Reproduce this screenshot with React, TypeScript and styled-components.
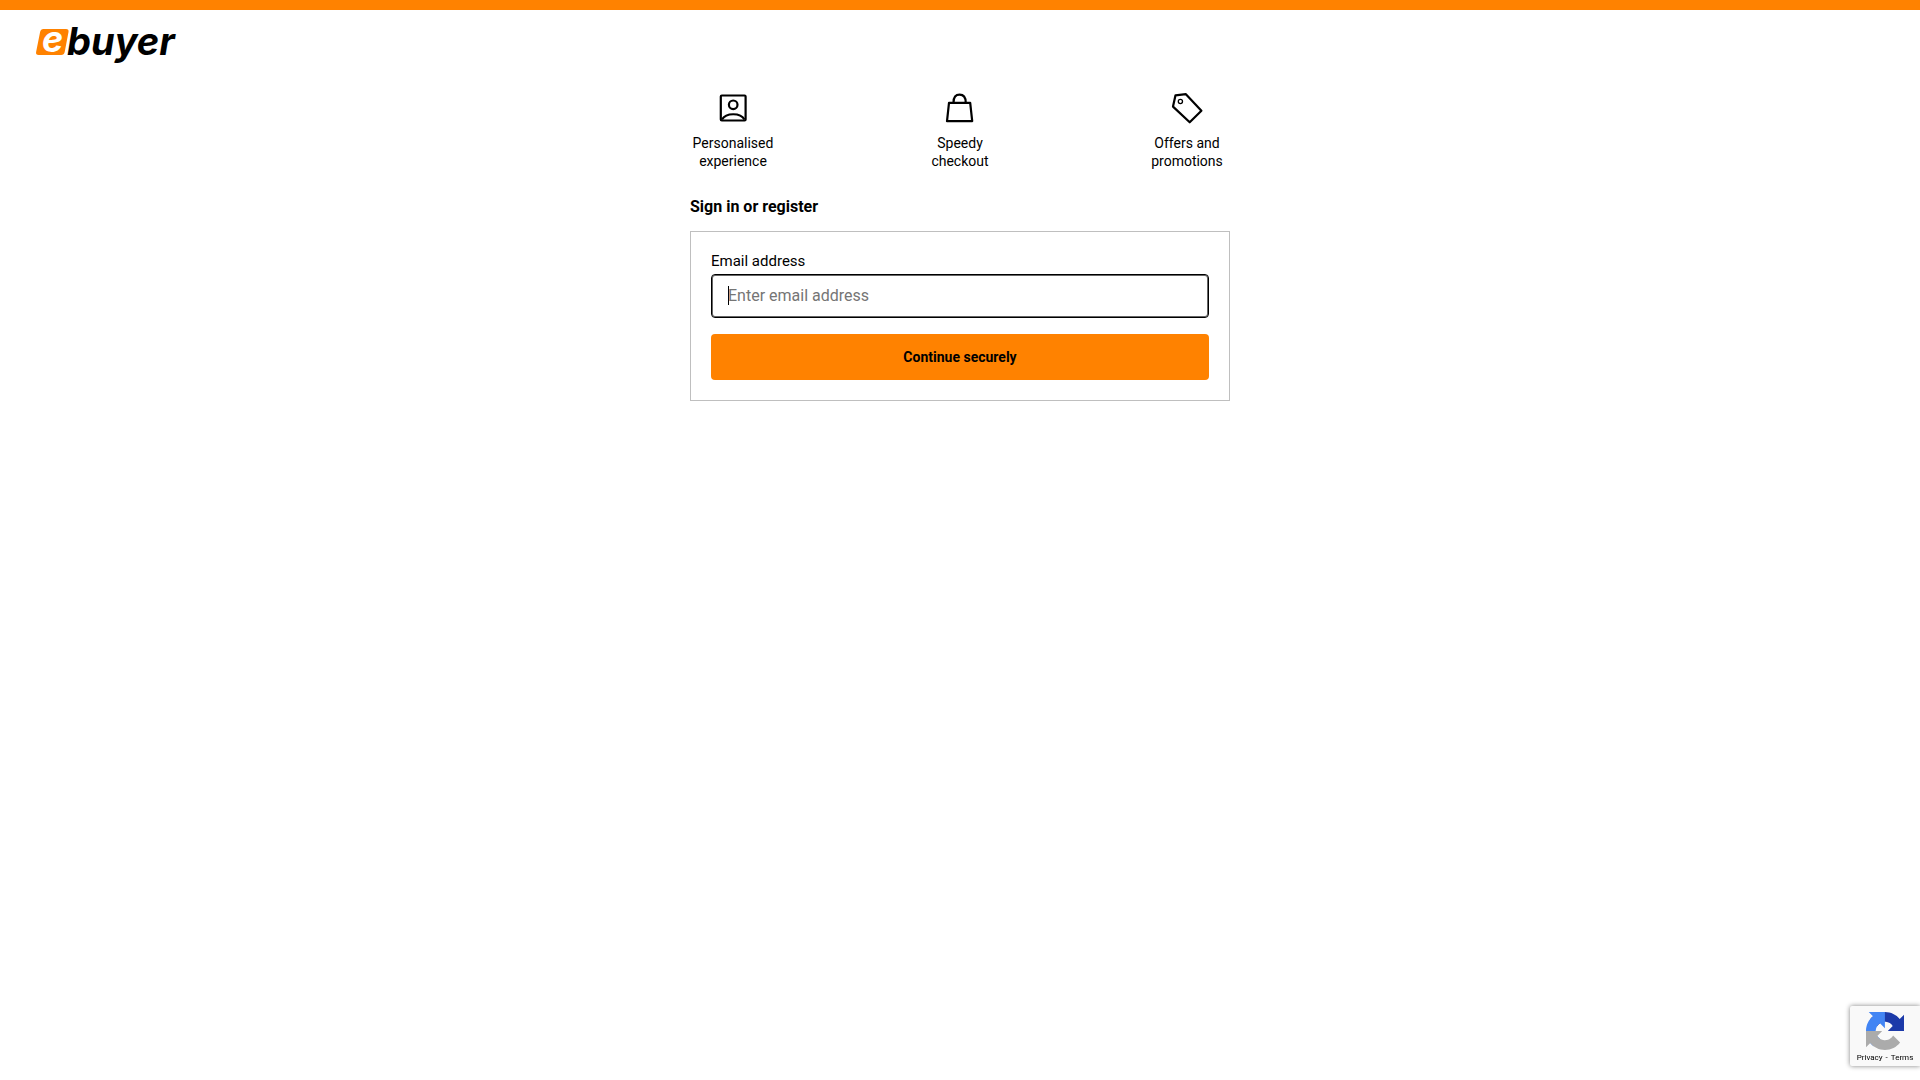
import React from "react";
import styled, { createGlobalStyle } from "styled-components";

const GlobalStyle = createGlobalStyle`
  *, *::before, *::after { box-sizing: border-box; }
  body {
    margin: 0;
    background: #fff;
    color: #000;
    font-family: Roboto, "Liberation Sans", sans-serif;
  }
`;

const Header = styled.header`
  border-top: 10px solid #ff8200;
  padding: 8px 34px 0;
`;

const LogoLink = styled.a`
  display: block;
  width: 150px;
  height: 52px;
`;

const LogoText = styled.text`
  font-family: Inter, "Open Sans", sans-serif;
  font-style: italic;
  font-weight: 700;
`;

const Main = styled.main`
  width: 100%;
  max-width: 540px;
  margin: 22px auto 0;
`;

const Benefits = styled.ul`
  display: flex;
  justify-content: space-between;
  margin: 0;
  padding: 0;
  list-style: none;
`;

const Benefit = styled.li`
  display: flex;
  flex-direction: column;
  align-items: center;
  gap: 10px;
  width: 86px;
  font-size: 14px;
  line-height: 18px;
  text-align: center;
`;

const Icon = styled.svg`
  width: 32px;
  height: 32px;
  fill: none;
  stroke: #000;
  stroke-width: 2.2;
  stroke-linejoin: round;
`;

const Title = styled.h1`
  margin: 27px 0 14px;
  font-size: 16px;
  font-weight: 700;
  line-height: 20px;
`;

const Card = styled.form`
  display: flex;
  flex-direction: column;
  padding: 20px;
  border: 1px solid #bfbfbf;
`;

const Label = styled.label`
  margin-bottom: 4px;
  font-size: 15px;
  line-height: 18px;
`;

const EmailInput = styled.input`
  height: 44px;
  margin-bottom: 16px;
  padding: 0 16px 2px;
  border: 1px solid #767676;
  border-radius: 4px;
  outline: none;
  background: #fff;
  color: #000;
  font: 16px Roboto, "Liberation Sans", sans-serif;

  &::placeholder { color: #757575; }

  &:focus {
    border-color: #000;
    box-shadow: inset 0 0 0 1px #666;
  }

  &:focus:placeholder-shown {
    caret-color: transparent;
    background: linear-gradient(#000, #000) 16px 11px / 1px 19px no-repeat #fff;
  }
`;

const Submit = styled.button`
  height: 46px;
  border: 0;
  border-radius: 4px;
  background: #ff8200;
  color: #000;
  font: 700 14px Roboto, "Liberation Sans", sans-serif;
  cursor: pointer;
`;

const Badge = styled.aside`
  position: fixed;
  right: 0;
  bottom: 14px;
  display: flex;
  flex-direction: column;
  align-items: center;
  width: 70px;
  height: 60px;
  padding-top: 6px;
  border-radius: 2px 0 0 2px;
  background: #f9f9f9;
  box-shadow: 0 0 5px gray;
`;

const BadgeLinks = styled.div`
  display: flex;
  gap: 3px;
  margin-top: 3px;
  font-size: 8px;
  line-height: 10px;
  white-space: nowrap;
`;

const BadgeLink = styled.a`
  color: #000;
  text-decoration: none;
`;

export default function App() {
  return (
    <>
      <GlobalStyle />
      <Header>
        <LogoLink href="/" aria-label="ebuyer">
          <svg width="150" height="52" viewBox="0 0 150 52">
            <path d="M9.500 11h22.500q3 0 2.500 3l-3.800 20q-.6 3-3.500 3H4.700q-3.200 0-2.600-3l4-20q.6-3 3.400-3z" fill="#ff8200" />
            <LogoText x="8" y="34" fontSize="36" fill="#fff">e</LogoText>
            <LogoText x="33" y="37" fontSize="38" fill="#000">buyer</LogoText>
          </svg>
        </LogoLink>
      </Header>
      <Main>
        <Benefits>
          <Benefit>
            <Icon viewBox="0 0 32 32" aria-hidden="true">
              <rect x="3.800" y="3.500" width="24.800" height="25" rx="1" />
              <circle cx="16.200" cy="12.800" r="4.300" />
              <path d="M5 27.500c4-7 18.500-7 22.500 0" />
            </Icon>
            <span>Personalised experience</span>
          </Benefit>
          <Benefit>
            <Icon viewBox="0 0 32 32" aria-hidden="true">
              <path d="M5 10.800h21.200l2 18.400H3z" />
              <path d="M9.500 10.500C9.500 5 11.700 2.600 15.600 2.600s6.100 2.400 6.100 7.900" />
            </Icon>
            <span>Speedy checkout</span>
          </Benefit>
          <Benefit>
            <Icon viewBox="0 0 32 32" aria-hidden="true">
              <path d="M4.500 3.300 14.900 2.200 30.400 18.700 18.700 30.300 2 14.600z" />
              <circle cx="9.400" cy="9.500" r="2.100" strokeWidth="1.300" />
            </Icon>
            <span>Offers and promotions</span>
          </Benefit>
        </Benefits>
        <Title>Sign in or register</Title>
        <Card onSubmit={(event: React.FormEvent) => event.preventDefault()}>
          <Label htmlFor="email">Email address</Label>
          <EmailInput id="email" type="email" placeholder="Enter email address" autoFocus />
          <Submit type="submit">Continue securely</Submit>
        </Card>
      </Main>
      <Badge>
        <svg width="38" height="38" viewBox="0 0 64 64" aria-hidden="true">
          <path fill="#1c3aa9" d="M64 31.955l-.033-1.370V4.687l-7.160 7.160C50.948 4.674 42.033.093 32.050.093c-10.400 0-19.622 4.960-25.458 12.640l11.736 11.860a15.550 15.550 0 0 1 4.754-5.334c2.050-1.600 4.952-2.906 8.968-2.906.485 0 .86.057 1.135.163 4.976.393 9.288 3.140 11.828 7.124l-8.307 8.307z" />
          <path fill="#4285f4" d="M31.862.094l-1.370.033H4.594l7.160 7.160C4.580 13.147 0 22.060 0 32.046c0 10.400 4.960 19.622 12.640 25.458L24.500 45.768a15.550 15.550 0 0 1-5.334-4.754c-1.600-2.050-2.906-4.952-2.906-8.968 0-.485.057-.86.163-1.135.393-4.976 3.140-9.288 7.124-11.828l8.307 8.307z" />
          <path fill="#ababab" d="M.001 32.045l.033 1.370v25.898l7.160-7.160c5.860 7.173 14.774 11.754 24.760 11.754 10.400 0 19.622-4.960 25.458-12.640l-11.736-11.860a15.550 15.550 0 0 1-4.754 5.334c-2.050 1.600-4.952 2.906-8.968 2.906-.485 0-.86-.057-1.135-.163-4.976-.393-9.288-3.140-11.828-7.124l8.307-8.307z" />
        </svg>
        <BadgeLinks>
          <BadgeLink href="#privacy">Privacy</BadgeLink>
          <span>-</span>
          <BadgeLink href="#terms">Terms</BadgeLink>
        </BadgeLinks>
      </Badge>
    </>
  );
}
